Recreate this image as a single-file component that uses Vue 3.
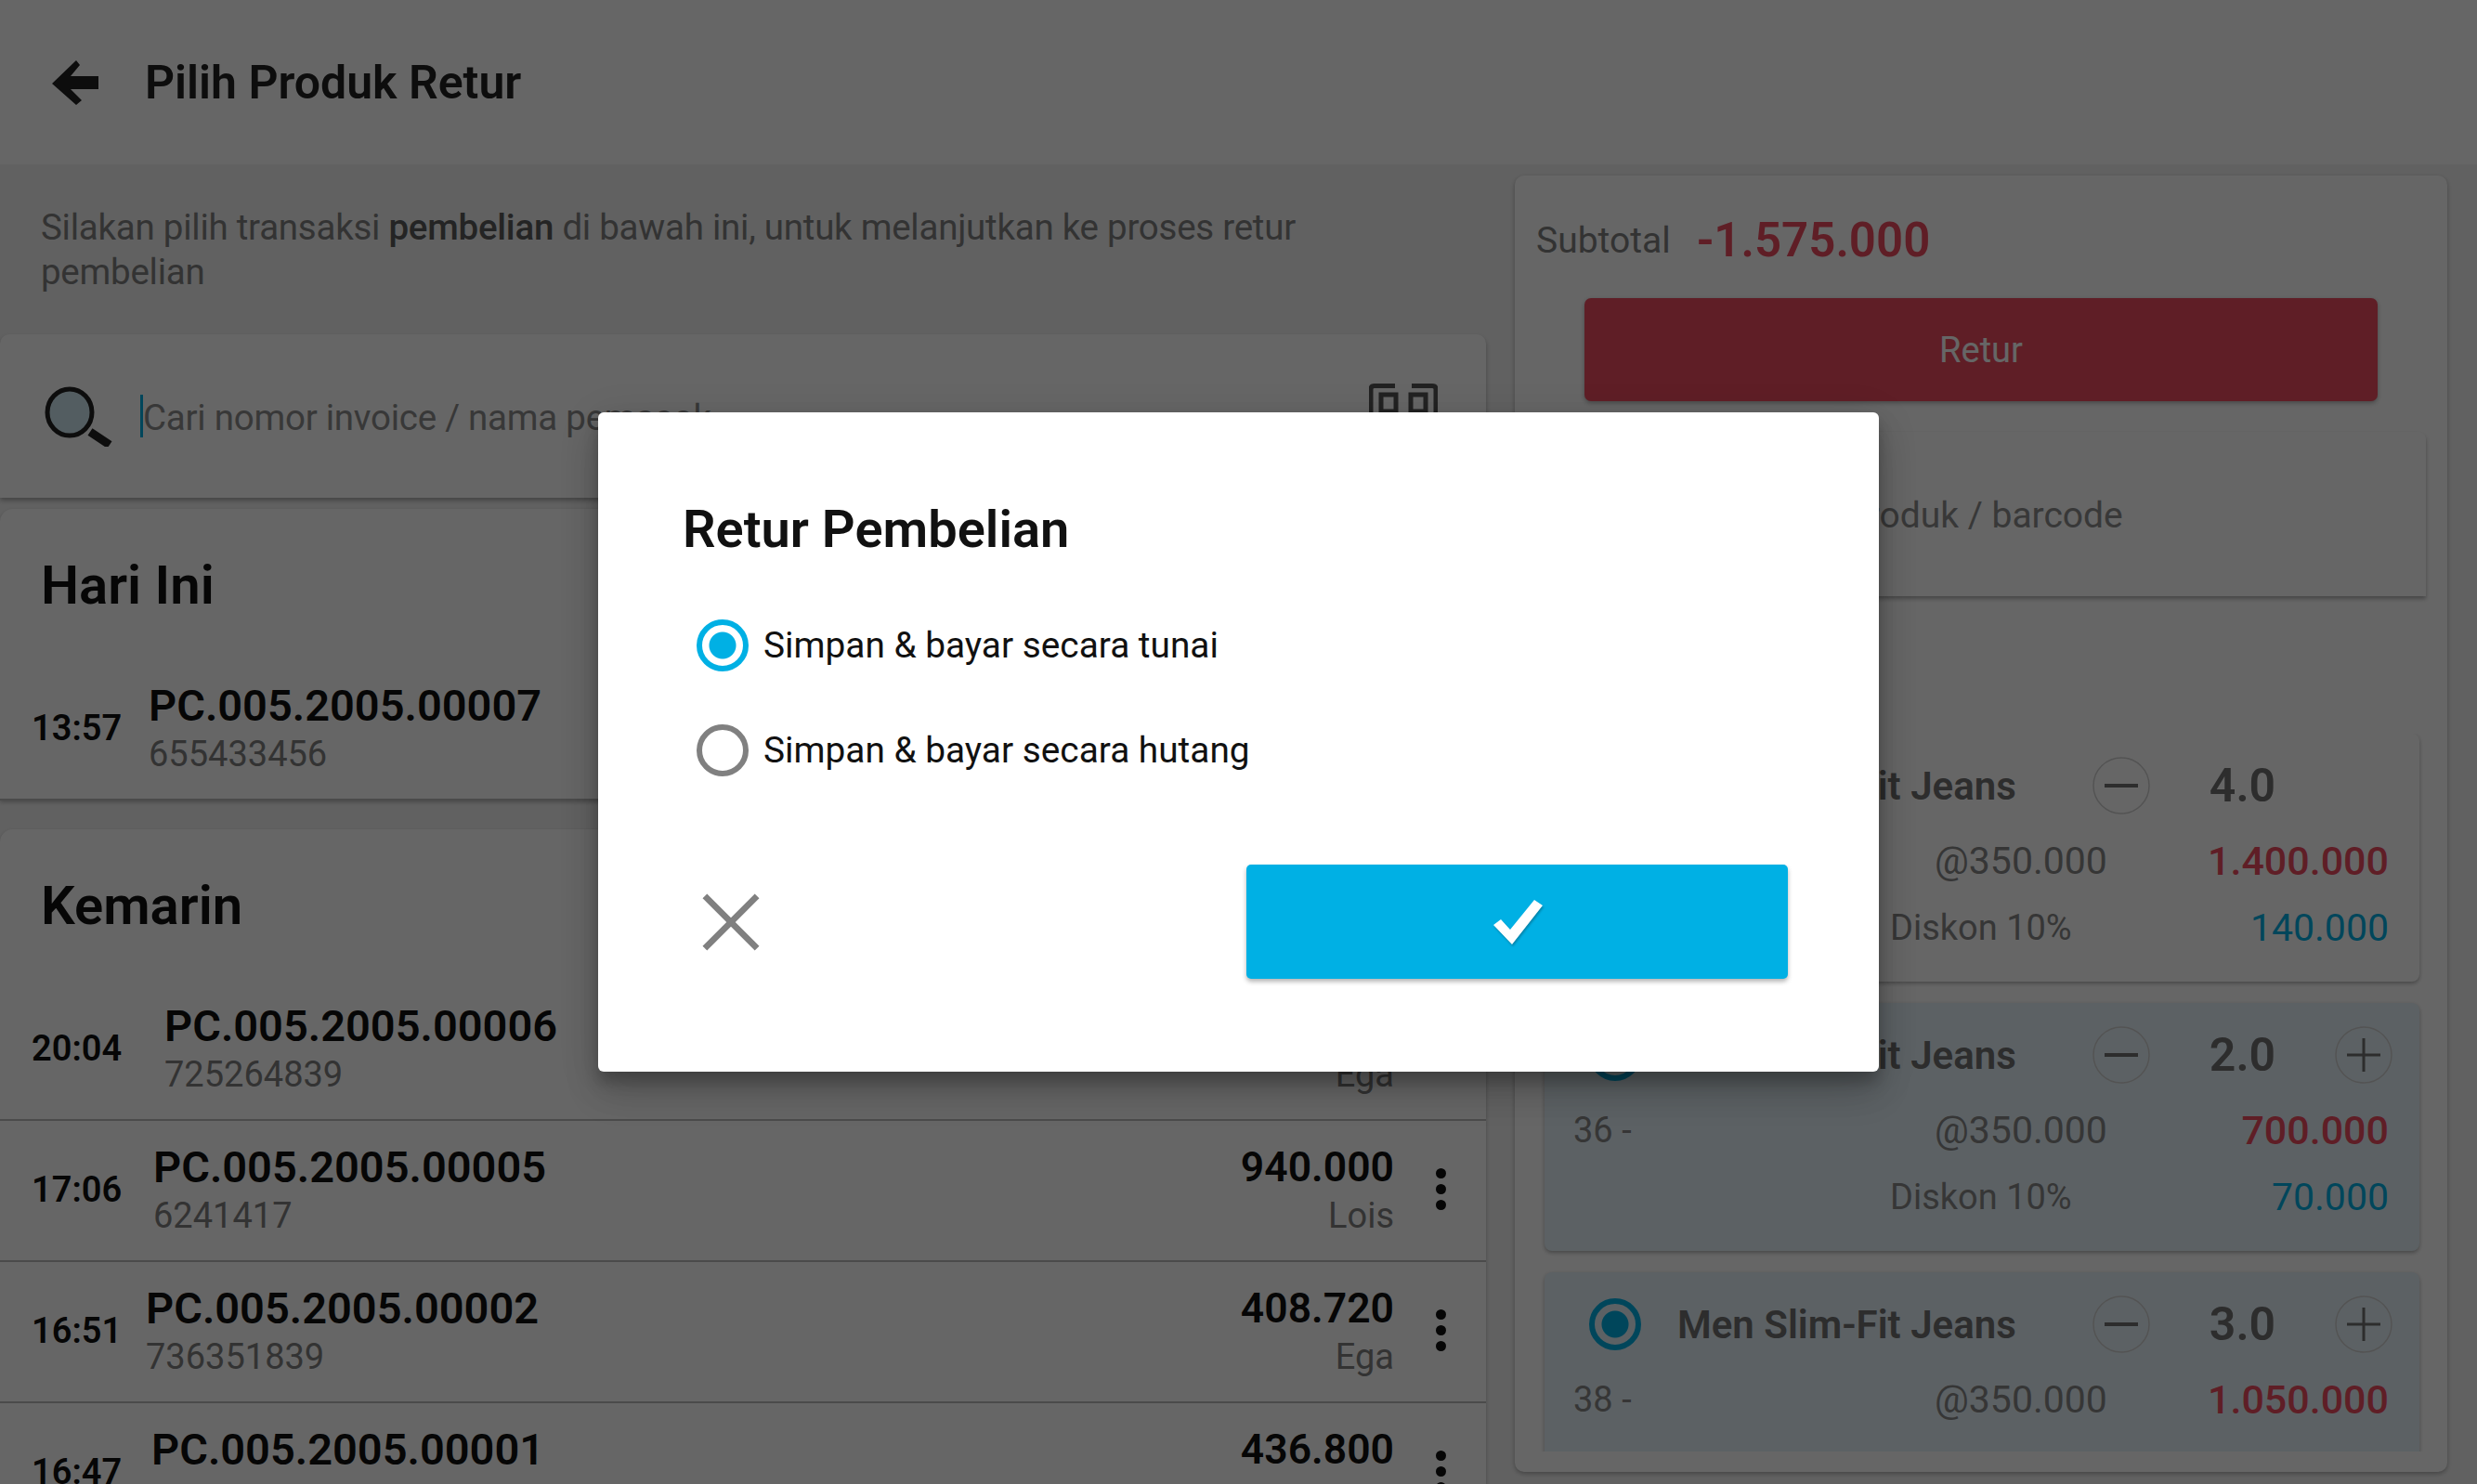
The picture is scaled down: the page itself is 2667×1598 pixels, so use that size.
<template>
  <div class="page">
    <header class="appbar">
      <svg class="back" viewBox="0 0 50 48">
        <path d="M26 0 L0 25 L26 48 L32 43 L20 31 H50 V17 H20 L30 5 Z" />
      </svg>
      <h1 class="appbar-title">Pilih Produk Retur</h1>
    </header>

    <main class="content">
      <section class="left">
        <p class="intro">Silakan pilih transaksi <b>pembelian</b> di bawah ini, untuk melanjutkan ke proses retur pembelian</p>

        <div class="search-card">
          <svg class="search-icon" viewBox="0 0 74 66">
            <ellipse cx="27" cy="29" rx="24" ry="25" fill="#d0e8f2" stroke="#222" stroke-width="5" />
            <path d="M49 50 L70 64" stroke="#222" stroke-width="9" />
          </svg>
          <span class="caret"></span>
          <span class="search-text">Cari nomor invoice / nama pemasok</span>
          <svg class="scan-icon" viewBox="0 0 74 40" fill="none" stroke="#555" stroke-width="5">
            <path d="M2 38 V6 Q2 2.5 6 2.5 H28" />
            <path d="M46 2.5 H68 Q72 2.5 72 6 V38" />
            <rect x="13" y="12" width="16" height="18" />
            <rect x="45" y="12" width="16" height="18" />
          </svg>
        </div>

        <div v-for="group in groups" :key="group.title" class="group-card">
          <h2 class="group-title">{{ group.title }}</h2>
          <div v-for="row in group.rows" :key="row.code" class="row">
            <span class="row-time" :style="{ width: row.timeWidth + 'px' }">{{ row.time }}</span>
            <div class="row-main">
              <div class="row-code">{{ row.code }}</div>
              <div class="row-sub">{{ row.sub }}</div>
            </div>
            <div class="row-end">
              <div class="row-amount">{{ row.amount }}</div>
              <div class="row-sub">{{ row.who }}</div>
            </div>
            <div class="dots"><i></i><i></i><i></i></div>
          </div>
        </div>
      </section>

      <aside class="right">
        <div class="subtotal">
          <span class="subtotal-label">Subtotal</span>
          <span class="subtotal-value">-1.575.000</span>
        </div>
        <button class="retur-btn">Retur</button>
        <div class="product-search">
          <span>Cari nama produk / barcode</span>
        </div>

        <div class="items">
          <div v-for="item in items" :key="item.qty" class="item" :class="{ selected: item.selected }">
            <div class="item-head">
              <span class="item-radio"></span>
              <span class="item-name">Men Slim-Fit Jeans</span>
              <span class="step">
                <svg viewBox="0 0 62 62"><circle cx="31" cy="31" r="30" fill="none" stroke="#d0d0d0" stroke-width="1.5" /><path d="M13 31 H49" stroke="#707070" stroke-width="4" /></svg>
              </span>
              <span class="item-qty">{{ item.qty }}</span>
              <span class="step">
                <svg v-if="item.plus" viewBox="0 0 62 62"><circle cx="31" cy="31" r="30" fill="none" stroke="#d0d0d0" stroke-width="1.5" /><path d="M13 31 H49 M31 13 V49" stroke="#707070" stroke-width="3" /></svg>
              </span>
            </div>
            <div class="item-row item-row-first">
              <span class="item-size">{{ item.size }}</span>
              <span class="item-label item-unit">@350.000</span>
              <span class="item-price">{{ item.price }}</span>
            </div>
            <div v-if="item.cut" class="item-row">
              <span class="item-size item-size-short"></span>
              <span class="item-label">Diskon 10%</span>
              <span class="item-cut">{{ item.cut }}</span>
            </div>
          </div>
        </div>
      </aside>
    </main>

    <div class="overlay">
      <div class="dialog">
        <h3 class="dialog-title">Retur Pembelian</h3>
        <label class="option">
          <span class="radio on"></span>
          <span>Simpan &amp; bayar secara tunai</span>
        </label>
        <label class="option">
          <span class="radio"></span>
          <span>Simpan &amp; bayar secara hutang</span>
        </label>
        <div class="dialog-actions">
          <svg class="close" viewBox="0 0 64 64">
            <path d="M3 3 L61 61 M61 3 L3 61" stroke="#808080" stroke-width="7" fill="none" />
          </svg>
          <button class="confirm">
            <svg viewBox="0 0 56 50"><path d="M2 28 L10 22 L20 33 L46 1 L55 7 L22 49 Z" fill="#fff" /></svg>
          </button>
        </div>
      </div>
    </div>
  </div>
</template>

<script setup>
const groups = [
  {
    title: 'Hari Ini',
    rows: [
      { time: '13:57', timeWidth: 126, code: 'PC.005.2005.00007', sub: '655433456', amount: '350.000', who: 'Ega' }
    ]
  },
  {
    title: 'Kemarin',
    rows: [
      { time: '20:04', timeWidth: 143, code: 'PC.005.2005.00006', sub: '725264839', amount: '520.000', who: 'Ega' },
      { time: '17:06', timeWidth: 131, code: 'PC.005.2005.00005', sub: '6241417', amount: '940.000', who: 'Lois' },
      { time: '16:51', timeWidth: 123, code: 'PC.005.2005.00002', sub: '736351839', amount: '408.720', who: 'Ega' },
      { time: '16:47', timeWidth: 129, code: 'PC.005.2005.00001', sub: '736351839', amount: '436.800', who: 'Ega' }
    ]
  }
]

const items = [
  { qty: '4.0', size: '34 -', price: '1.400.000', cut: '140.000', plus: false, selected: false },
  { qty: '2.0', size: '36 -', price: '700.000', cut: '70.000', plus: true, selected: true },
  { qty: '3.0', size: '38 -', price: '1.050.000', cut: '', plus: true, selected: true }
]
</script>

<style>
html, body { margin: 0; background: #f3f3f3; }
</style>

<style scoped>
* { box-sizing: border-box; }

.page {
  position: relative;
  width: 2667px;
  height: 1598px;
  overflow: hidden;
  background: #f3f3f3;
  font-family: Roboto, "Liberation Sans", sans-serif;
  color: #111;
}

.appbar {
  height: 177px;
  background: #fff;
  display: flex;
  align-items: center;
  padding-left: 56px;
  gap: 50px;
}
.back { width: 50px; height: 48px; fill: #222; }
.appbar-title { margin: 0; font-size: 50px; font-weight: 600; color: #222; }

.content { display: flex; height: 1421px; }

.left { width: 1600px; flex-shrink: 0; }
.intro {
  margin: 0;
  height: 183px;
  padding: 44px 150px 0 44px;
  font-size: 38.5px;
  letter-spacing: -0.25px;
  line-height: 48px;
  color: #808080;
}
.intro b { font-weight: 500; color: #5a5a5a; }

.search-card {
  height: 176px;
  background: #fff;
  border-radius: 10px 10px 0 0;
  box-shadow: 0 3px 5px rgba(0, 0, 0, .3);
  display: flex;
  align-items: center;
  padding: 0 52px 0 48px;
  margin-bottom: 12px;
}
.search-icon { width: 74px; height: 66px; flex-shrink: 0; }
.caret { width: 3px; height: 46px; background: #00b0e4; margin-left: 29px; flex-shrink: 0; }
.search-text { font-size: 38.5px; letter-spacing: -0.25px; color: #8c8c8c; flex: 1; padding-top: 2px; }
.scan-icon { width: 74px; height: 40px; align-self: flex-start; margin-top: 53px; }

.group-card {
  background: #fff;
  border-radius: 14px 14px 0 0;
  box-shadow: 0 2px 4px rgba(0, 0, 0, .25);
  margin-bottom: 31px;
}
.group-title {
  margin: 0;
  height: 162px;
  padding: 50px 0 0 44px;
  font-size: 58px;
  line-height: 64px;
  font-weight: 600;
}
.row {
  display: flex;
  align-items: center;
  height: 152px;
  padding: 0 43px 0 34px;
  border-bottom: 2px solid #bcbcbc;
}
.row-time { font-size: 38px; font-weight: 600; padding-bottom: 2px; flex-shrink: 0; }
.row-main { flex: 1; }
.row-code { font-size: 47px; font-weight: 600; line-height: 52px; }
.row-sub { font-size: 38px; color: #808080; line-height: 50px; margin-top: 1px; }
.row-end { text-align: right; margin-right: 45px; }
.row-amount { font-size: 44.5px; font-weight: 600; line-height: 52px; }
.dots { display: flex; flex-direction: column; gap: 6px; margin-bottom: 4px; }
.dots i { width: 11px; height: 11px; border-radius: 50%; background: #111; }

.right {
  width: 1004px;
  height: 1396px;
  margin: 12px 0 0 31px;
  background: #fff;
  border-radius: 10px;
  box-shadow: 0 2px 5px rgba(0, 0, 0, .3);
  padding: 0 23px;
  overflow: hidden;
}
.subtotal { display: flex; align-items: center; height: 132px; gap: 28px; padding-top: 7px; }
.subtotal-label { font-size: 39px; color: #808080; }
.subtotal-value { font-size: 51px; font-weight: 600; color: #ed4d5f; }
.retur-btn {
  display: block;
  width: 854px;
  height: 111px;
  margin-left: 52px;
  background: #ed4d5f;
  border: 0;
  border-radius: 7px;
  color: #fff;
  font: 400 38px Roboto, sans-serif;
  box-shadow: 0 2px 5px rgba(0, 0, 0, .3);
}
.product-search {
  height: 177px;
  margin: 33px 0 0 0;
  background: #fff;
  border-radius: 8px 8px 0 0;
  box-shadow: 0 3px 4px rgba(0, 0, 0, .3);
  display: flex;
  align-items: center;
  padding: 2px 0 0 148px;
  font-size: 39px;
  color: #8c8c8c;
}

.items { height: 773px; margin-top: 148px; padding: 0 7px 0 9px; display: flex; flex-direction: column; gap: 23px; overflow: hidden; }
.item {
  flex-shrink: 0;
  min-height: 267px;
  padding: 0 29px 0 30px;
  background: #fff;
  border-radius: 8px;
  box-shadow: 0 2px 4px rgba(0, 0, 0, .3);
}
.item.selected { background: #e6f3fa; }
.item-head { display: flex; align-items: center; height: 112px; }
.item-radio {
  width: 56px;
  height: 56px;
  margin-left: 18px;
  border-radius: 50%;
  border: 6px solid #00b0e4;
  background: radial-gradient(circle, #00b0e4 14px, transparent 15px);
  flex-shrink: 0;
}
.item-name { width: 486px; padding-left: 39px; font-size: 42px; font-weight: 600; white-space: nowrap; color: #707070; }
.step { width: 62px; height: 62px; flex-shrink: 0; }
.step svg { display: block; width: 62px; height: 62px; }
.item-qty { width: 199px; text-align: center; font-size: 50px; font-weight: 600; color: #707070; }
.item-row { display: flex; align-items: center; height: 72px; margin-right: 4px; font-size: 38px; color: #888; }
.item-row-first { margin-top: -11px; }
.item-size { width: 390px; padding-left: 1px; }
.item-size-short { width: 342px; }
.item-label { flex: 1; }
.item-unit { font-size: 41px; }
.item-price { color: #ed4d5f; font-weight: 500; font-size: 43px; }
.item-cut { color: #00b0e4; font-size: 41px; }

.overlay {
  position: absolute;
  inset: 0;
  background: rgba(0, 0, 0, .6);
  display: flex;
  align-items: flex-start;
  justify-content: flex-start;
  padding: 444px 0 0 644px;
}
.dialog {
  width: 1379px;
  height: 710px;
  background: #fff;
  border-radius: 6px;
  padding: 90px 98px 0 91px;
  box-shadow: 0 24px 38px rgba(0, 0, 0, .14), 0 9px 46px rgba(0, 0, 0, .12), 0 11px 15px rgba(0, 0, 0, .2);
}
.dialog-title { margin: 0 0 32px; font-size: 56px; line-height: 72px; font-weight: 600; color: #111; }
.option {
  display: flex;
  align-items: center;
  height: 113px;
  gap: 16px;
  padding-left: 15px;
  font-size: 38.8px;
  color: #111;
}
.radio { width: 56px; height: 56px; border-radius: 50%; border: 6px solid #808080; }
.radio.on { border-color: #00b0e4; background: radial-gradient(circle, #00b0e4 14px, transparent 15px); }
.dialog-actions { display: flex; align-items: center; justify-content: space-between; margin-top: 67px; }
.close { width: 62px; height: 62px; margin-left: 21px; }
.confirm {
  width: 583px;
  height: 123px;
  background: #00b0e4;
  border: 0;
  border-radius: 5px;
  box-shadow: 0 3px 5px rgba(0, 0, 0, .3);
  display: flex;
  align-items: center;
  justify-content: center;
}
.confirm svg { width: 56px; height: 50px; filter: drop-shadow(1px 2px 1px rgba(0, 0, 0, .25)); }
</style>
